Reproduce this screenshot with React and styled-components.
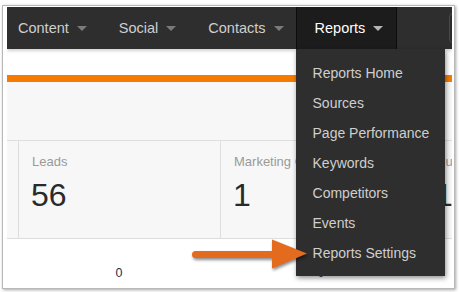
import React from "react";
import styled, { createGlobalStyle } from "styled-components";

const GlobalStyle = createGlobalStyle`
  html, body {
    margin: 0;
    padding: 0;
    background: #ffffff;
    width: 459px;
    height: 292px;
    overflow: hidden;
  }
  body {
    font-family: "Liberation Sans", Helvetica, Arial, sans-serif;
  }
`;

const Frame = styled.div`
  box-sizing: border-box;
  margin: 5px 0 0 2px;
  width: 453px;
  height: 284px;
  border: 1px solid #b8b8b8;
  box-shadow: 1px 1px 3px rgba(0, 0, 0, 0.35);
  padding: 1px 1px 1px 4px;
  background: #fff;
`;

const Screen = styled.div`
  position: relative;
  width: 445px;
  height: 281px;
  overflow: hidden;
  background: #fff;
`;

const NavBar = styled.nav`
  position: relative;
  z-index: 2;
  display: flex;
  align-items: stretch;
  height: 42px;
  background: #2e2e2e;
  box-shadow: 0 2px 3px rgba(0, 0, 0, 0.18);
`;

const NavItem = styled.div`
  position: relative;
  display: flex;
  align-items: center;
  padding: 0 16px;
  font-size: 14.5px;
  color: #cfcfcf;

  &:first-child {
    padding-left: 11px;
  }
`;

const ActiveItem = styled(NavItem)`
  margin-left: -4px;
  padding: 0 13px 0 18px;
  color: #ffffff;
  background: #1c1c1c;
  border-left: 1px solid #0c0c0c;
  border-right: 1px solid #0c0c0c;
`;

const Caret = styled.span`
  display: inline-block;
  margin-left: 8px;
  width: 0;
  height: 0;
  border-left: 5px solid transparent;
  border-right: 5px solid transparent;
  border-top: 5px solid ${(p) => (p.$light ? "#b5b5b5" : "#7a7a7a")};
`;

const SearchBox = styled.div`
  margin: 6px 0 6px 52px;
  flex: 0 0 120px;
  border: 1px solid #4a4a4a;
  border-radius: 4px;
  background: #2b2b2b;
`;

const Menu = styled.ul`
  position: absolute;
  top: 100%;
  left: -1px;
  margin: 0;
  width: 149px;
  padding: 9px 0 8px;
  list-style: none;
  background: #2e2e2e;
  box-shadow: 1px 2px 5px rgba(0, 0, 0, 0.45);
`;

const MenuItem = styled.li`
  height: 30px;
  line-height: 30px;
  padding-left: 17px;
  font-size: 14px;
  color: #cfcfcf;
  white-space: nowrap;
`;

const Spacer = styled.div`
  height: ${(p) => p.$h}px;
`;

const OrangeBar = styled.div`
  height: 7px;
  background: #f77a00;
`;

const Dashboard = styled.div`
  background: #f7f7f7;
  padding-top: 58px;
`;

const StatsRow = styled.div`
  display: flex;
  height: 97px;
  padding-left: 11px;
  border-top: 1px solid #dedede;
  border-bottom: 1px solid #dedede;
`;

const StatCell = styled.div`
  flex: 0 0 202px;
  box-sizing: border-box;
  padding: 13px 0 0 13px;
  border-left: 1px solid #dedede;
  white-space: nowrap;
`;

const StatLabel = styled.div`
  font-size: 13px;
  line-height: 16px;
  color: #9a9a9a;
`;

const StatValue = styled.div`
  margin-top: 7px;
  margin-left: -1px;
  font-size: 32px;
  line-height: 36px;
  color: #2a2a2a;
`;

const TotalsRow = styled.div`
  display: flex;
  padding: 27px 0 0 11px;
`;

const TotalCell = styled.div`
  flex: 0 0 202px;
  text-align: center;
  font-size: 12.5px;
  color: #24344f;
`;

const Pointer = styled.svg`
  position: absolute;
  left: 178px;
  top: 225px;
  z-index: 5;
  overflow: visible;
  filter: drop-shadow(1px 2px 1.5px rgba(0, 0, 0, 0.45));
`;

const menuItems = [
  "Reports Home",
  "Sources",
  "Page Performance",
  "Keywords",
  "Competitors",
  "Events",
  "Reports Settings",
];

const stats = [
  { label: "Leads", value: "56" },
  { label: "Marketing Qualified Leads", value: "1" },
  { label: "Customers", value: "13" },
];

export default function App() {
  return (
    <>
      <GlobalStyle />
      <Frame>
        <Screen>
          <NavBar>
            <NavItem>
              Content <Caret />
            </NavItem>
            <NavItem>
              Social <Caret />
            </NavItem>
            <NavItem>
              Contacts <Caret />
            </NavItem>
            <ActiveItem>
              Reports <Caret $light />
              <Menu>
                {menuItems.map((item) => (
                  <MenuItem key={item}>{item}</MenuItem>
                ))}
              </Menu>
            </ActiveItem>
            <SearchBox />
          </NavBar>

          <Spacer $h={26} />
          <OrangeBar />
          <Dashboard>
            <StatsRow>
              {stats.map((s) => (
                <StatCell key={s.label}>
                  <StatLabel>{s.label}</StatLabel>
                  <StatValue>{s.value}</StatValue>
                </StatCell>
              ))}
            </StatsRow>
          </Dashboard>
          <TotalsRow>
            <TotalCell>0</TotalCell>
            <TotalCell>0</TotalCell>
            <TotalCell>0</TotalCell>
          </TotalsRow>

          <Pointer width="130" height="45" viewBox="0 0 130 45">
            <line
              x1="10.5"
              y1="22.5"
              x2="90"
              y2="22.5"
              stroke="#e46a1d"
              strokeWidth="7"
              strokeLinecap="round"
            />
            <polygon points="87,7.5 122,21.5 87,36.5" fill="#e46a1d" />
          </Pointer>
        </Screen>
      </Frame>
    </>
  );
}
